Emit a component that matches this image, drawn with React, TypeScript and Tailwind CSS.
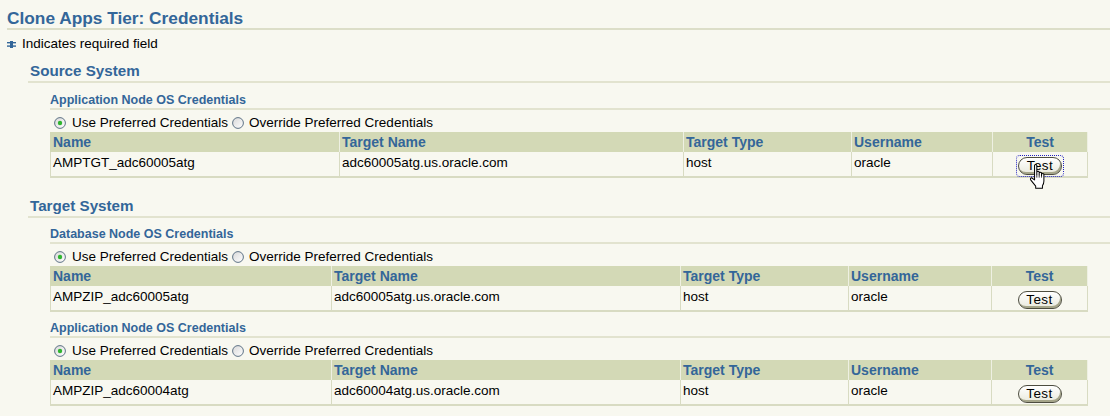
import React from "react";

const BLUE = "text-[#336699]";

function Radio({ checked }: { checked?: boolean }) {
  return (
    <svg width="12" height="12" viewBox="0 0 12 12" className="shrink-0">
      <defs>
        <linearGradient id={checked ? "rg1" : "rg0"} x1="0" y1="0" x2="1" y2="1">
          <stop offset="0" stopColor="#d8d8d8" />
          <stop offset="1" stopColor="#ffffff" />
        </linearGradient>
      </defs>
      <circle cx="6" cy="6" r="5.4" fill={`url(#${checked ? "rg1" : "rg0"})`} stroke="#5f7386" strokeWidth="1" />
      {checked && <circle cx="6" cy="6" r="2.2" fill="#2fb52f" />}
    </svg>
  );
}

function RadioRow() {
  return (
    <div className="mt-[5px] ml-[4px] flex items-center h-[16px] text-[13.5px] leading-[16px] text-black">
      <Radio checked />
      <span className="ml-[6px]">Use Preferred Credentials</span>
      <span className="ml-[4px]"><Radio /></span>
      <span className="ml-[5px]">Override Preferred Credentials</span>
    </div>
  );
}

function TestButton() {
  return (
    <button className="w-[44px] h-[18px] rounded-full border border-[#4d4d40] bg-gradient-to-b from-[#ffffff] to-[#e9e9dc] shadow-[inset_-1px_-2px_0_#a6a68a] text-[13.5px] leading-[14px] text-black tracking-[0.4px] font-['Liberation_Sans',Arial,sans-serif]">
      Test
    </button>
  );
}

function Hand() {
  return (
    <svg width="21" height="27" viewBox="0 0 18 24" className="absolute left-[35px] top-[11px]">
      <path
        d="M5.5 2 Q6.5 0.8 7.5 2 V10 V7.8 Q8.6 6.8 9.6 7.8 V10.5 V8.8 Q10.7 7.8 11.7 8.8 V11 V9.8 Q12.8 8.8 13.8 9.8 V16 Q13.8 18.5 12.5 20.2 V22.5 H6.5 V20.5 L2.2 15.2 Q1.2 13.6 2.8 13.1 L5.5 15 Z"
        fill="#ffffff"
        stroke="#000000"
        strokeWidth="0.9"
        strokeLinejoin="round"
      />
      <path d="M7.5 10 V13 M9.6 10.5 V13 M11.7 11 V13" stroke="#000" strokeWidth="0.7" />
    </svg>
  );
}

type Row = { name: string; target: string; type: string; user: string };

function CredTable({ widths, row, focused }: { widths: number[]; row: Row; focused?: boolean }) {
  const th = "bg-[#d3d9b6] text-[#336699] font-bold text-[14px] leading-[20px] h-[20px] px-[2px] border-r border-[#eef0e2] p-0 align-middle";
  const td = "align-top text-[13.5px] leading-[16px] text-black px-[2px] pt-[3px] h-[26px] border-r border-b-2 border-[#d8dbc2]";
  return (
    <table className="mt-[1px] w-[1038px] table-fixed border-separate border-spacing-0">
      <colgroup>
        {widths.map((w, i) => (
          <col key={i} style={{ width: w }} />
        ))}
      </colgroup>
      <thead>
        <tr>
          <th className={th + " text-left border-l border-l-[#d3d9b6]"}>Name</th>
          <th className={th + " text-left"}>Target Name</th>
          <th className={th + " text-left"}>Target Type</th>
          <th className={th + " text-left"}>Username</th>
          <th className={th + " text-center"}>Test</th>
        </tr>
      </thead>
      <tbody>
        <tr>
          <td className={td + " border-l"}>{row.name}</td>
          <td className={td}>{row.target}</td>
          <td className={td}>{row.type}</td>
          <td className={td}>{row.user}</td>
          <td className={td + " text-center relative pt-[5px]"}>
            <div className="flex justify-center">
              <div className={focused ? "outline outline-1 outline-dotted outline-[#2020c0] outline-offset-[1px] rounded-[2px] flex" : "flex"}>
                <TestButton />
              </div>
            </div>
            {focused && <Hand />}
          </td>
        </tr>
      </tbody>
    </table>
  );
}

function SubSection({ title, mt, widths, row, focused }: { title: string; mt: string; widths: number[]; row: Row; focused?: boolean }) {
  return (
    <div className={`ml-[22px] ${mt}`}>
      <div className={`${BLUE} font-bold text-[12.5px] leading-[15px] border-b-2 border-[#e2e3cf]`}>{title}</div>
      <RadioRow />
      <CredTable widths={widths} row={row} focused={focused} />
    </div>
  );
}

export default function App() {
  const w1 = [290, 344, 168, 141, 95];
  const w2 = [282, 349, 168, 143, 96];
  return (
    <div className="w-[1110px] h-[416px] overflow-hidden bg-[#f8f8f0] font-['Liberation_Sans',Arial,sans-serif]">
      <div className={`ml-[7px] pt-[8px] ${BLUE} font-bold text-[17.3px] leading-[20px] border-b-2 border-[#dcdec8]`}>
        Clone Apps Tier: Credentials
      </div>
      <div className="ml-[7px] mt-[6px] flex items-center h-[16px] text-[13.5px] leading-[16px] text-black">
        <svg width="9" height="7" viewBox="0 0 9 7" className="shrink-0">
          <rect x="0" y="1" width="9" height="1.4" fill="#336699" />
          <rect x="0" y="4.4" width="9" height="1.4" fill="#336699" />
          <rect x="3" y="0" width="3" height="7" fill="#336699" />
        </svg>
        <span className="ml-[6px]">Indicates required field</span>
      </div>

      <div className="ml-[28px] mt-[10px]">
        <div className={`pl-[2px] pb-[1px] ${BLUE} font-bold text-[15.2px] leading-[18px] border-b-2 border-[#e2e3cf]`}>Source System</div>
        <SubSection
          title="Application Node OS Credentials"
          mt="mt-[10px]"
          widths={w1}
          row={{ name: "AMPTGT_adc60005atg", target: "adc60005atg.us.oracle.com", type: "host", user: "oracle" }}
          focused
        />
      </div>

      <div className="ml-[28px] mt-[19px]">
        <div className={`pl-[2px] pb-[1px] ${BLUE} font-bold text-[15.2px] leading-[18px] border-b-2 border-[#e2e3cf]`}>Target System</div>
        <SubSection
          title="Database Node OS Credentials"
          mt="mt-[9px]"
          widths={w2}
          row={{ name: "AMPZIP_adc60005atg", target: "adc60005atg.us.oracle.com", type: "host", user: "oracle" }}
        />
        <SubSection
          title="Application Node OS Credentials"
          mt="mt-[9px]"
          widths={w2}
          row={{ name: "AMPZIP_adc60004atg", target: "adc60004atg.us.oracle.com", type: "host", user: "oracle" }}
        />
      </div>
    </div>
  );
}
